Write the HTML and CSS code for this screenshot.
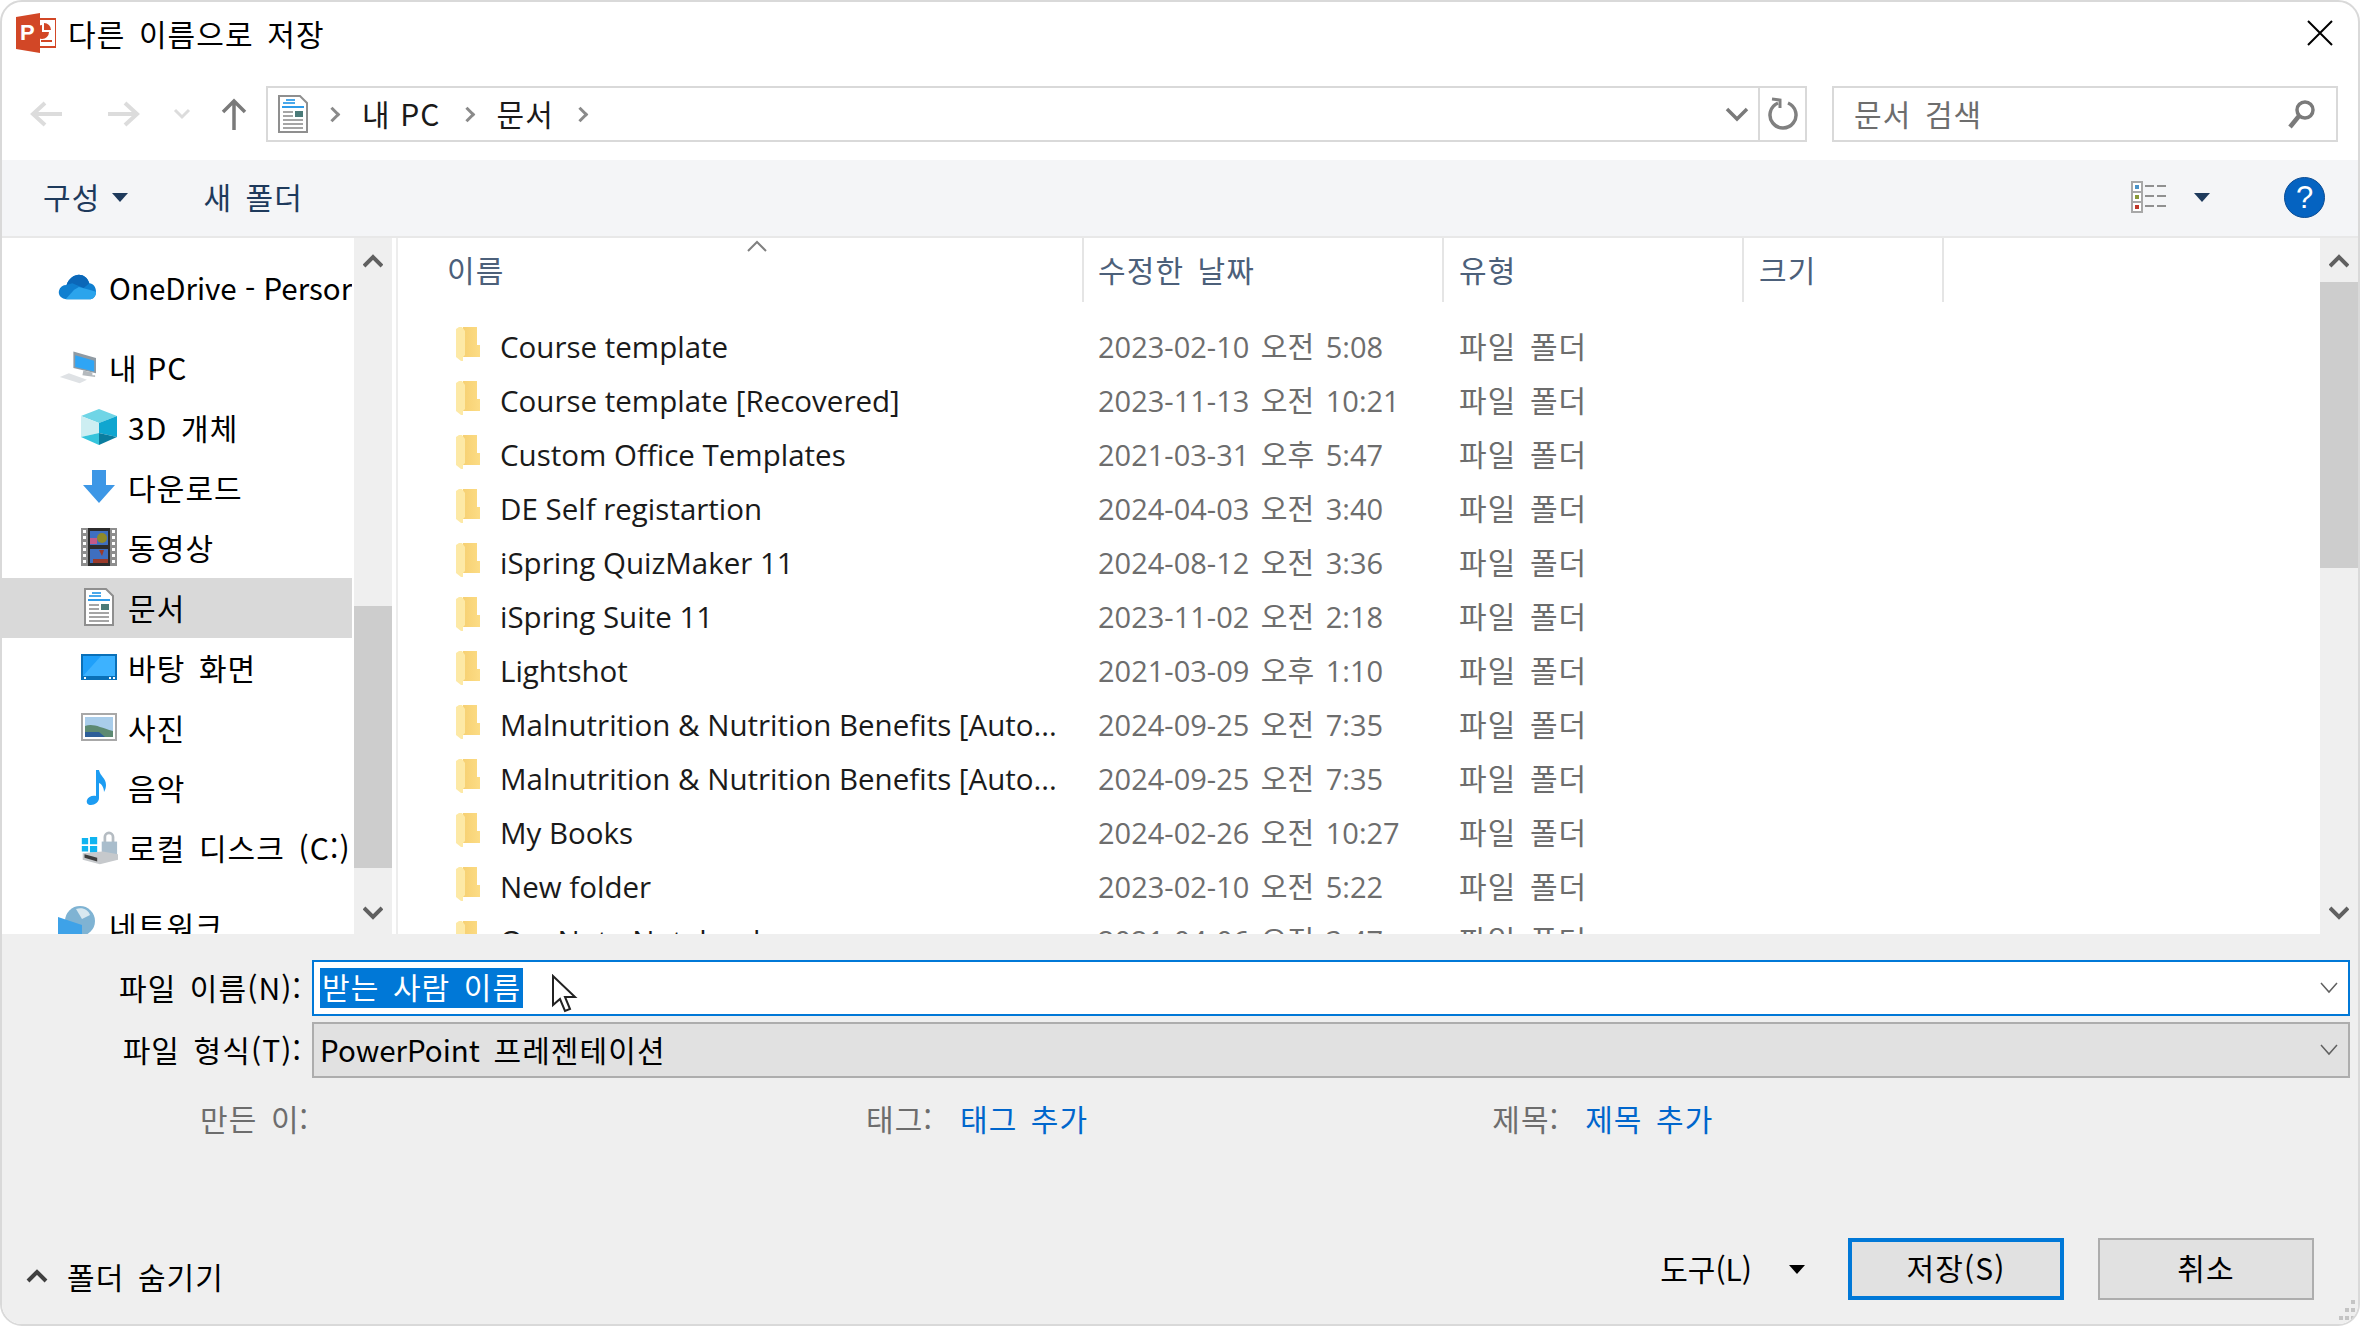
FILE: index.html
```html
<!DOCTYPE html>
<html lang="ko">
<head>
    <meta charset="UTF-8">
    <title>다른 이름으로 저장</title>
    <link rel="stylesheet" href="styles.css">
</head>
<body>
<div class="window">
    <div class="titlebar">
        <svg class="app-icon" width="40" height="40" viewBox="0 0 40 40">
            <rect x="17" y="6" width="23" height="28" fill="#fff" stroke="#d24726" stroke-width="2"/>
            <path d="M26 12a7 7 0 1 0 7 7h-7z" fill="#d24726"/>
            <path d="M28 10a7 7 0 0 1 7 7h-7z" fill="#d24726"/>
            <path d="M25 27h11v2H25z" fill="#d24726"/>
            <path d="M0 4L24 0v40L0 36z" fill="#d24726"/>
            <text x="4" y="27" class="app-letter">P</text>
        </svg>
        <span class="title">다른 이름으로 저장</span>
        <svg class="close" width="26" height="26" viewBox="0 0 26 26"><path d="M1 1l24 24M25 1L1 25" stroke="#000" stroke-width="2" fill="none"/></svg>
    </div>

    <div class="navbar">
        <svg class="nav-btn" width="34" height="28" viewBox="0 0 34 28"><path d="M32 14H4M15 3L3 14l12 11" stroke="#dcdcdc" stroke-width="4" fill="none"/></svg>
        <svg class="nav-btn forward" width="34" height="28" viewBox="0 0 34 28"><path d="M2 14h28M19 3l12 11-12 11" stroke="#dcdcdc" stroke-width="4" fill="none"/></svg>
        <svg class="nav-btn recent" width="18" height="12" viewBox="0 0 18 12"><path d="M2 2l7 7 7-7" stroke="#dcdcdc" stroke-width="3" fill="none"/></svg>
        <svg class="nav-btn up" width="28" height="32" viewBox="0 0 28 32"><path d="M14 32V3M3 14L14 3l11 11" stroke="#7a7a7a" stroke-width="3.5" fill="none"/></svg>
        <div class="address">
            <svg class="crumb-icon" width="30" height="38" viewBox="0 0 30 38">
                <path d="M1 1h21l7 7v29H1z" fill="#fff" stroke="#8f8f8f" stroke-width="2"/>
                <path d="M4 11h22v2H4z" fill="#2e9be8"/><path d="M8 4h9v2H8zM5 7h12v2H5z" fill="#4aa8ea"/>
                <path d="M5 16h10v2H5zM5 20h10v2H5zM5 24h20v2H5zM5 28h20v2H5zM5 32h20v2H5z" fill="#a5a5a5"/>
                <path d="M17 16h8v6h-8z" fill="#4a7a78"/>
            </svg>
            <span class="crumb-sep"></span>
            <span class="crumb">내 PC</span>
            <span class="crumb-sep"></span>
            <span class="crumb">문서</span>
            <span class="crumb-sep"></span>
            <svg class="address-drop" width="24" height="16" viewBox="0 0 24 16"><path d="M2 3l10 10L22 3" stroke="#7a7a7a" stroke-width="3.5" fill="none"/></svg>
            <div class="refresh">
                <svg width="30" height="34" viewBox="0 0 30 34"><path d="M10 6a13 13 0 1 0 10 0" stroke="#808080" stroke-width="3.5" fill="none"/><path d="M4 2l8 1v8" stroke="#808080" stroke-width="3" fill="none"/></svg>
            </div>
        </div>
        <div class="search">
            <span>문서 검색</span>
            <svg width="28" height="30" viewBox="0 0 28 30"><circle cx="17" cy="11" r="8" stroke="#7a7a7a" stroke-width="3.5" fill="none"/><path d="M11 17L2 28" stroke="#7a7a7a" stroke-width="4.5"/></svg>
        </div>
    </div>

    <div class="toolbar">
        <span class="tool">구성</span>
        <span class="tri"></span>
        <span class="tool new-folder">새 폴더</span>
        <svg class="view-icon" width="36" height="32" viewBox="0 0 36 32">
            <path d="M1 1h10v30H1zM1 11h10M1 21h10" stroke="#a8a8a8" stroke-width="2" fill="#fff"/>
            <path d="M4 4h4v4H4z" fill="#4b93c8"/><path d="M4 14h4v4H4z" fill="#8a9a3a"/><path d="M4 24h4v4H4z" fill="#c0392b"/>
            <path d="M14 5h9M26 5h9M14 15h9M26 15h9M14 25h9M26 25h9" stroke="#909090" stroke-width="2"/>
        </svg>
        <span class="tri view-tri"></span>
        <span class="help">?</span>
    </div>

    <div class="panes">
        <nav class="tree">
            <div class="tree-list">
                <div class="tree-row top">
                    <svg width="40" height="28" viewBox="0 0 40 28">
                        <path d="M10 27C3 27 0 22 1 18 2 14 5 12 9 12 11 5 17 1 22 1 27 1 31 4 33 10 37 10 40 14 40 19 40 24 37 27 33 27z" fill="#0f7fd0"/>
                        <path d="M9 12C11 5 17 1 22 1 27 1 31 4 33 10L27 15 15 10z" fill="#0b67b8"/>
                        <path d="M8 27L17 17 22 14 33 17 40 19C40 24 37 27 33 27z" fill="#2ba4ec"/>
                    </svg>
                    <span class="latin">OneDrive - Persor</span>
                </div>
                <div class="tree-row top gap">
                    <svg width="42" height="38" viewBox="0 0 42 38">
                        <path d="M17 2l25 7v17l-25-6z" fill="#8f9aa3"/>
                        <path d="M19 6l21 6v12l-21-5z" fill="#2fa5f5"/>
                        <path d="M28 23l10 2v3h3v2l-14-2z" fill="#b4b9bd"/>
                        <path d="M2 30l10-4 20 7-8 4z" fill="#dfe2e5"/>
                    </svg>
                    <span class="tight">내 PC</span>
                </div>
                <div class="tree-row">
                    <svg width="36" height="36" viewBox="0 0 36 36">
                        <path d="M18 0l18 7-18 7L0 7z" fill="#6fd5e6"/>
                        <path d="M0 7l18 7v10L0 28z" fill="#cdeef2"/>
                        <path d="M36 7L18 14v10l18 4z" fill="#0fa6d0"/>
                        <path d="M0 28l18-4v12z" fill="#35c4dc"/>
                        <path d="M36 28l-18-4v12z" fill="#0a7d9f"/>
                    </svg>
                    <span>3D 개체</span>
                </div>
                <div class="tree-row">
                    <svg width="36" height="34" viewBox="0 0 36 34"><path d="M11 0h14v15h9L18 33 2 15h9z" fill="#3d97e6"/></svg>
                    <span>다운로드</span>
                </div>
                <div class="tree-row">
                    <svg width="36" height="38" viewBox="0 0 36 38">
                        <path d="M0 0h36v38H0z" fill="#8e8e8e"/>
                        <path d="M2 2h3v3H2zM2 8h3v3H2zM2 14h3v3H2zM2 20h3v3H2zM2 26h3v3H2zM2 32h3v3H2zM31 2h3v3h-3zM31 8h3v3h-3zM31 14h3v3h-3zM31 20h3v3h-3zM31 26h3v3h-3zM31 32h3v3h-3z" fill="#fff"/>
                        <path d="M7 0h22v38H7z" fill="#2c2c2c"/>
                        <path d="M9 3h18v14H9zM9 21h18v14H9z" fill="#3f6fc0"/>
                        <path d="M9 10h7v6H9z" fill="#c25a8a"/><circle cx="21" cy="10" r="5" fill="#8f8a2a"/>
                        <path d="M18 22h5l-2 6zM12 31h15v4H12z" fill="#9a3a2a"/>
                    </svg>
                    <span>동영상</span>
                </div>
                <div class="tree-row active">
                    <svg width="30" height="38" viewBox="0 0 30 38">
                        <path d="M1 1h21l7 7v29H1z" fill="#fff" stroke="#8f8f8f" stroke-width="2"/>
                        <path d="M4 11h22v2H4z" fill="#2e9be8"/><path d="M8 4h9v2H8zM5 7h12v2H5z" fill="#4aa8ea"/>
                        <path d="M5 16h10v2H5zM5 20h10v2H5zM5 24h20v2H5zM5 28h20v2H5zM5 32h20v2H5z" fill="#a5a5a5"/>
                        <path d="M17 16h8v6h-8z" fill="#4a7a78"/>
                    </svg>
                    <span>문서</span>
                </div>
                <div class="tree-row">
                    <svg width="36" height="26" viewBox="0 0 36 26">
                        <path d="M0 0h36v26H0z" fill="#0a70b8"/><path d="M2 2h32v20H2z" fill="#1fa0fa"/>
                        <path d="M2 22L20 2h14v20z" fill="#3db2ff"/>
                        <path d="M3 23h2v2H3zM28 23h2v2h-2zM32 23h2v2h-2z" fill="#fff"/>
                    </svg>
                    <span>바탕 화면</span>
                </div>
                <div class="tree-row">
                    <svg width="36" height="28" viewBox="0 0 36 28">
                        <path d="M1 1h34v26H1z" fill="#fff" stroke="#a8a8a8" stroke-width="2"/>
                        <path d="M4 4h28v20H4z" fill="#a9cdea"/>
                        <path d="M4 13c8-3 14 1 28 5v6H4z" fill="#5d8a72"/>
                        <path d="M4 19h14l6 5H4z" fill="#2d5f99"/>
                    </svg>
                    <span>사진</span>
                </div>
                <div class="tree-row">
                    <svg width="36" height="36" viewBox="0 0 36 36">
                        <path d="M15 1h3c1 6 7 8 7 15 0 3-1 5-2 7 0-4-2-8-5-9v15c0 4-4 7-8 7-3 0-5-2-4-5s5-5 9-4z" fill="#1c9cf2"/>
                    </svg>
                    <span>음악</span>
                </div>
                <div class="tree-row">
                    <svg class="disk-icon" width="42" height="38" viewBox="0 0 42 38">
                        <path d="M2 9h7v7H2zM11 8h8v8h-8zM2 18h7v6H2zM11 18h8v7h-8z" fill="#10b4f0"/>
                        <path d="M26 8a6 6 0 0 1 12 0v6h-3V8a3 3 0 0 0-6 0v6h-3z" fill="#b5bcc2"/>
                        <path d="M24 13h17v16H24z" fill="#a9bdcc"/>
                        <path d="M3 26l22-2 17 3v6L22 38 3 33z" fill="#c6c9cc"/>
                        <path d="M5 27l14 4v4L5 31z" fill="#3d3d3d"/>
                    </svg>
                    <span>로컬 디스크 (C:)</span>
                </div>
                <div class="tree-row top net">
                    <svg width="38" height="40" viewBox="0 0 38 40">
                        <circle cx="22" cy="16" r="15" fill="#7fb3d3"/>
                        <path d="M18 4c6-2 12 0 14 6l-8 4z" fill="#d8e8f0"/>
                        <path d="M0 12l24 8v20H0z" fill="#3ea2e8"/>
                    </svg>
                    <span>네트워크</span>
                </div>
            </div>
            <div class="scrollbar">
                <svg class="arrow" width="20" height="14" viewBox="0 0 20 14"><path d="M1 12l9-9 9 9" stroke="#606060" stroke-width="4" fill="none"/></svg>
                <div class="tree-spacer"></div>
                <div class="thumb-bar tree-thumb"></div>
                <div class="tree-tail"></div>
                <svg class="arrow" width="20" height="14" viewBox="0 0 20 14"><path d="M1 2l9 9 9-9" stroke="#606060" stroke-width="4" fill="none"/></svg>
            </div>
        </nav>

        <main class="files">
            <div class="file-head">
                <svg class="sort-caret" width="20" height="12" viewBox="0 0 20 12"><path d="M1 11l9-9 9 9" stroke="#808080" stroke-width="2" fill="none"/></svg>
                <div class="col-name head-cell">이름</div>
                <div class="col-date head-cell">수정한 날짜</div>
                <div class="col-type head-cell">유형</div>
                <div class="col-size head-cell">크기</div>
            </div>
            <div class="file-rows">
                <div class="file-row"><svg class="folder" viewBox="0 0 24 34"><use href="#folder"/></svg><div class="col-name">Course template</div><div class="col-date">2023-02-10 오전 5:08</div><div class="col-type">파일 폴더</div></div>
                <div class="file-row"><svg class="folder" viewBox="0 0 24 34"><use href="#folder"/></svg><div class="col-name">Course template [Recovered]</div><div class="col-date">2023-11-13 오전 10:21</div><div class="col-type">파일 폴더</div></div>
                <div class="file-row"><svg class="folder" viewBox="0 0 24 34"><use href="#folder"/></svg><div class="col-name">Custom Office Templates</div><div class="col-date">2021-03-31 오후 5:47</div><div class="col-type">파일 폴더</div></div>
                <div class="file-row"><svg class="folder" viewBox="0 0 24 34"><use href="#folder"/></svg><div class="col-name">DE Self registartion</div><div class="col-date">2024-04-03 오전 3:40</div><div class="col-type">파일 폴더</div></div>
                <div class="file-row"><svg class="folder" viewBox="0 0 24 34"><use href="#folder"/></svg><div class="col-name">iSpring QuizMaker 11</div><div class="col-date">2024-08-12 오전 3:36</div><div class="col-type">파일 폴더</div></div>
                <div class="file-row"><svg class="folder" viewBox="0 0 24 34"><use href="#folder"/></svg><div class="col-name">iSpring Suite 11</div><div class="col-date">2023-11-02 오전 2:18</div><div class="col-type">파일 폴더</div></div>
                <div class="file-row"><svg class="folder" viewBox="0 0 24 34"><use href="#folder"/></svg><div class="col-name">Lightshot</div><div class="col-date">2021-03-09 오후 1:10</div><div class="col-type">파일 폴더</div></div>
                <div class="file-row"><svg class="folder" viewBox="0 0 24 34"><use href="#folder"/></svg><div class="col-name">Malnutrition &amp; Nutrition Benefits [Auto...</div><div class="col-date">2024-09-25 오전 7:35</div><div class="col-type">파일 폴더</div></div>
                <div class="file-row"><svg class="folder" viewBox="0 0 24 34"><use href="#folder"/></svg><div class="col-name">Malnutrition &amp; Nutrition Benefits [Auto...</div><div class="col-date">2024-09-25 오전 7:35</div><div class="col-type">파일 폴더</div></div>
                <div class="file-row"><svg class="folder" viewBox="0 0 24 34"><use href="#folder"/></svg><div class="col-name">My Books</div><div class="col-date">2024-02-26 오전 10:27</div><div class="col-type">파일 폴더</div></div>
                <div class="file-row"><svg class="folder" viewBox="0 0 24 34"><use href="#folder"/></svg><div class="col-name">New folder</div><div class="col-date">2023-02-10 오전 5:22</div><div class="col-type">파일 폴더</div></div>
                <div class="file-row"><svg class="folder" viewBox="0 0 24 34"><use href="#folder"/></svg><div class="col-name">OneNote Notebooks</div><div class="col-date">2021-04-06 오전 3:47</div><div class="col-type">파일 폴더</div></div>
            </div>
        </main>

        <div class="scrollbar main-scroll">
            <svg class="arrow" width="20" height="14" viewBox="0 0 20 14"><path d="M1 12l9-9 9 9" stroke="#606060" stroke-width="4" fill="none"/></svg>
            <div class="thumb-bar main-thumb"></div>
            <div class="main-tail"></div>
            <svg class="arrow" width="20" height="14" viewBox="0 0 20 14"><path d="M1 2l9 9 9-9" stroke="#606060" stroke-width="4" fill="none"/></svg>
        </div>
    </div>

    <div class="bottom">
        <div class="field-row name-row">
            <label class="field-label">파일 이름(N):</label>
            <div class="field input-field">
                <span class="selected">받는 사람 이름</span>
                <svg class="cursor" width="28" height="40" viewBox="0 0 28 40"><path d="M2 2v29l7-6 5 12 5-2-5-12h10z" fill="#fff" stroke="#222" stroke-width="2"/></svg>
                <svg class="combo-drop" width="18" height="12" viewBox="0 0 18 12"><path d="M1 1l8 9 8-9" stroke="#606060" stroke-width="1.5" fill="none"/></svg>
            </div>
        </div>
        <div class="field-row type-row">
            <label class="field-label">파일 형식(T):</label>
            <div class="field select-field">
                <span class="select-text"><span class="latin">PowerPoint</span> 프레젠테이션</span>
                <svg class="combo-drop" width="18" height="12" viewBox="0 0 18 12"><path d="M1 1l8 9 8-9" stroke="#606060" stroke-width="1.5" fill="none"/></svg>
            </div>
        </div>
        <div class="meta">
            <span class="meta-label author">만든 이:</span>
            <span class="meta-label tag">태그:</span>
            <span class="meta-link tag-link">태그 추가</span>
            <span class="meta-label subject">제목:</span>
            <span class="meta-link">제목 추가</span>
        </div>
        <div class="actions">
            <svg class="hide-chevron" width="22" height="14" viewBox="0 0 22 14"><path d="M2 12l9-9 9 9" stroke="#404040" stroke-width="4" fill="none"/></svg>
            <span class="hide-folders">폴더 숨기기</span>
            <span class="tools">도구(L)</span>
            <span class="tri tools-tri"></span>
            <button class="btn primary">저장(S)</button>
            <button class="btn">취소</button>
        </div>
        <svg class="grip" width="22" height="26" viewBox="0 0 22 26"><path d="M15 2h4v4h-4zM9 10h4v4H9zM15 10h4v4h-4zM3 18h4v4H3zM9 18h4v4H9zM15 18h4v4h-4z" fill="#c4c4c4"/></svg>
    </div>
</div>

<svg class="defs" width="0" height="0">
    <defs>
        <linearGradient id="folderFill" x1="0" x2="1" y1="0" y2="0"><stop offset="0" stop-color="#f6cf70"/><stop offset="1" stop-color="#fcdc85"/></linearGradient>
        <g id="folder">
            <path d="M5 0H21V18H24V30H7V0z" fill="url(#folderFill)"/>
            <path d="M0 2L3 0H6L9 4V28L7 30V34H5L0 30z" fill="#fde9a6"/>
        </g>
    </defs>
</svg>
</body>
</html>
```

FILE: styles.css
```css
* {
    box-sizing: border-box;
}
body {
    margin: 0;
    background: #fff;
    font-family: "Noto Sans CJK KR", "Noto Sans", sans-serif;
    font-size: 30px;
    letter-spacing: 1.1px;
    word-spacing: 4px;
    color: #000;
}
svg {
    display: block;
    flex: none;
}
.defs {
    position: absolute;
}
.latin {
    font-size: 29.5px;
    letter-spacing: 0;
    word-spacing: 0;
}
.tight {
    word-spacing: 0;
}
.window {
    width: 2360px;
    height: 1326px;
    border: 2px solid #d9d9d9;
    border-radius: 22px;
    overflow: hidden;
    display: flex;
    flex-direction: column;
    background: #fff;
}
.titlebar {
    height: 78px;
    flex: none;
    display: flex;
    align-items: center;
    padding: 0 14px 16px 14px;
}
.app-letter {
    font-family: "Liberation Sans", sans-serif;
    font-size: 22px;
    font-weight: bold;
    fill: #fff;
}
.title {
    margin-left: 12px;
    line-height: 1;
}
.close {
    margin-left: auto;
    margin-right: 11px;
}
.navbar {
    height: 80px;
    flex: none;
    display: flex;
    align-items: center;
    padding: 0 20px 12px 28px;
}
.nav-btn.forward {
    margin-left: 42px;
}
.nav-btn.recent {
    margin-left: 33px;
}
.nav-btn.up {
    margin-left: 29px;
}
.address {
    margin-left: 18px;
    width: 1541px;
    height: 56px;
    border: 2px solid #d9d9d9;
    display: flex;
    align-items: center;
    padding-left: 10px;
    color: #1a1a1a;
}
.crumb-sep {
    width: 11px;
    height: 11px;
    margin: 0 22px 0 19px;
    border-top: 3px solid #8a8a8a;
    border-right: 3px solid #8a8a8a;
    transform: rotate(45deg);
}
.crumb {
    margin: 0 2px 2px;
    word-spacing: 0;
}
.address-drop {
    margin-left: auto;
    margin-right: 9px;
}
.refresh {
    width: 47px;
    height: 100%;
    border-left: 2px solid #d9d9d9;
    display: flex;
    align-items: center;
    justify-content: center;
}
.search {
    margin-left: 25px;
    width: 506px;
    height: 56px;
    border: 2px solid #d9d9d9;
    display: flex;
    align-items: center;
    justify-content: space-between;
    padding: 0 20px 0 20px;
    color: #6d6d6d;
}
.search span {
    margin-bottom: 2px;
}
.toolbar {
    height: 78px;
    flex: none;
    background: #f4f5f7;
    border-bottom: 2px solid #e8e8e8;
    display: flex;
    align-items: center;
    padding: 0 0 2px 41px;
    color: #1e3a5c;
}
.tool {
    margin-bottom: 2px;
}
.tri {
    width: 0;
    height: 0;
    border-left: 8px solid transparent;
    border-right: 8px solid transparent;
    border-top: 9px solid #1e3a5c;
    margin-left: 12px;
}
.tool.new-folder {
    margin-left: 75px;
}
.view-icon {
    margin-left: auto;
}
.view-tri {
    margin-left: 27px;
}
.help {
    width: 41px;
    height: 41px;
    border-radius: 50%;
    background: #0563c1;
    border: 1px solid #0b4c93;
    color: #fff;
    font-family: "Liberation Sans", sans-serif;
    font-size: 31px;
    letter-spacing: 0;
    line-height: 39px;
    text-align: center;
    margin: 0 33px 0 74px;
}
.panes {
    height: 696px;
    flex: none;
    display: flex;
    overflow: hidden;
}
.tree {
    width: 390px;
    flex: none;
    display: flex;
}
.tree-list {
    width: 350px;
    flex: none;
    padding-top: 20px;
    overflow: hidden;
}
.tree-row {
    height: 60px;
    display: flex;
    align-items: center;
    padding: 0 0 2px 78px;
    white-space: nowrap;
}
.tree-row span {
    margin-left: 10px;
}
.tree-row svg {
    width: 38px;
}
.tree-row.top {
    padding-left: 56px;
}
.tree-row.top span {
    margin-left: 13px;
}
.tree-row.gap {
    margin-top: 20px;
}
.tree-row.net {
    margin-top: 18px;
}
.tree-row.active {
    background: #d9d9d9;
}
.scrollbar {
    background: #efefef;
    display: flex;
    flex-direction: column;
    align-items: center;
    padding: 16px 0 14px;
}
.tree .scrollbar {
    width: 38px;
    margin-left: 2px;
}
.main-scroll {
    width: 38px;
    flex: none;
}
.arrow {
    flex: none;
}
.thumb-bar {
    background: #cdcdcd;
    align-self: stretch;
    flex: none;
}
.tree-spacer {
    height: 338px;
    flex: none;
}
.tree-thumb {
    height: 262px;
}
.tree-tail {
    flex: 1;
}
.main-thumb {
    height: 286px;
    margin-top: 14px;
}
.main-tail {
    flex: 1;
}
.files {
    flex: 1;
    min-width: 0;
    border-left: 2px solid #ededed;
    margin-left: 4px;
    overflow: hidden;
}
.file-head {
    position: relative;
    height: 64px;
    display: flex;
    padding-left: 49px;
    color: #4c607a;
}
.sort-caret {
    position: absolute;
    left: 349px;
    top: 2px;
}
.head-cell {
    display: flex;
    align-items: center;
    border-right: 2px solid #e5e5e5;
    padding-bottom: 3px;
}
.col-name {
    width: 637px;
    flex: none;
}
.col-date {
    width: 360px;
    flex: none;
    padding-left: 14px;
}
.col-type {
    width: 300px;
    flex: none;
    padding-left: 15px;
}
.col-size {
    width: 200px;
    flex: none;
    padding-left: 15px;
}
.file-rows {
    padding-top: 17px;
}
.file-row {
    height: 54px;
    display: flex;
    align-items: center;
    padding-left: 58px;
    color: #6d6d6d;
}
.folder {
    width: 24px;
    height: 34px;
    margin-top: -4px;
}
.file-row .col-name {
    width: 604px;
    padding-left: 20px;
    color: #1a1a1a;
    font-family: "Open Sans", "Noto Sans CJK KR", sans-serif;
    font-size: 29.5px;
    letter-spacing: 0;
    word-spacing: 0;
    white-space: nowrap;
}
.file-row .col-date {
    font-family: "Open Sans", "Noto Sans CJK KR", sans-serif;
    font-size: 29px;
    letter-spacing: 0;
    word-spacing: 4px;
    padding-bottom: 2px;
}
.file-row .col-type {
    padding-bottom: 2px;
}
.bottom {
    flex: 1;
    position: relative;
    background: #efefef;
    padding: 26px 8px 0 0;
}
.field-row {
    display: flex;
    align-items: center;
    height: 56px;
}
.type-row {
    margin-top: 6px;
}
.field-label {
    width: 300px;
    text-align: right;
    white-space: nowrap;
    margin-bottom: 2px;
}
.field {
    margin-left: 10px;
    flex: 1;
    height: 56px;
    display: flex;
    align-items: center;
    padding-left: 6px;
}
.input-field {
    background: #fff;
    border: 2px solid #0078d7;
    position: relative;
}
.select-field {
    background: #e1e1e1;
    border: 2px solid #adadad;
}
.select-text {
    margin-bottom: 3px;
}
.selected {
    background: #0078d7;
    color: #fff;
    height: 40px;
    line-height: 36px;
    padding: 0 2px;
}
.cursor {
    position: absolute;
    left: 237px;
    top: 12px;
}
.combo-drop {
    margin-left: auto;
    margin-right: 10px;
}
.meta {
    display: flex;
    height: 56px;
    align-items: center;
    margin-top: 13px;
    padding-bottom: 2px;
}
.meta-label {
    color: #6d6d6d;
}
.author {
    margin-left: 198px;
}
.tag {
    margin-left: 557px;
}
.tag-link {
    margin-left: 27px;
}
.subject {
    margin-left: 404px;
}
.subject + .meta-link {
    margin-left: 26px;
}
.meta-link {
    color: #0066cc;
}
.actions {
    display: flex;
    align-items: center;
    height: 62px;
    margin-top: 91px;
}
.hide-chevron {
    margin: 14px 0 0 24px;
}
.hide-folders {
    margin: 14px 0 0 19px;
}
.tools {
    margin: 0 0 2px auto;
    letter-spacing: 0;
}
.tools-tri {
    border-top-color: #000;
    margin-left: 37px;
    margin-right: 43px;
}
.btn {
    width: 216px;
    height: 62px;
    background: #e1e1e1;
    border: 2px solid #adadad;
    font-family: inherit;
    font-size: 30px;
    letter-spacing: 1.1px;
    color: #000;
    padding: 0 0 4px;
}
.btn.primary {
    border: 4px solid #0078d7;
    margin-right: 34px;
}
.actions .btn:last-child {
    margin-right: 36px;
}
.grip {
    position: absolute;
    right: 0;
    bottom: 0;
}
```
